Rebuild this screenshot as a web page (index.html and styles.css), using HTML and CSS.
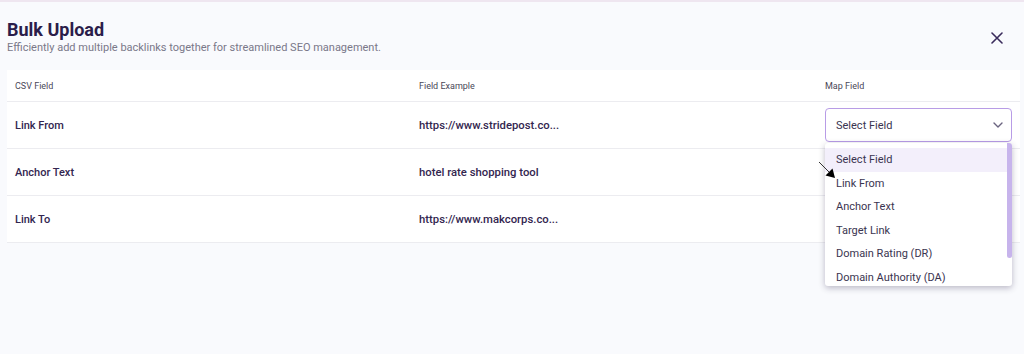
FILE: index.html
```html
<!DOCTYPE html>
<html lang="en">
<head>
<meta charset="utf-8">
<title>Bulk Upload</title>
<link rel="stylesheet" href="styles.css">
</head>
<body>
<div class="modal">
  <div class="modal-head">
    <div class="titles">
      <h1 class="title">Bulk Upload</h1>
      <p class="subtitle">Efficiently add multiple backlinks together for streamlined SEO management.</p>
    </div>
    <button class="close" aria-label="Close">
      <svg width="12" height="12" viewBox="0 0 12 12"><path d="M1 1L11 11M11 1L1 11" stroke="#3a2b5c" stroke-width="1.6" stroke-linecap="round"/></svg>
    </button>
  </div>
  <div class="table">
    <div class="row head">
      <div class="cell c1">CSV Field</div>
      <div class="cell c2">Field Example</div>
      <div class="cell c3">Map Field</div>
    </div>
    <div class="row">
      <div class="cell c1">Link From</div>
      <div class="cell c2 strong">https://www.stridepost.co...</div>
      <div class="cell c3">
        <div class="select-wrap">
          <div class="select">
            <span>Select Field</span>
            <svg width="10" height="6" viewBox="0 0 10 6"><path d="M1 1L5 5L9 1" fill="none" stroke="#6b6480" stroke-width="1.4" stroke-linecap="round" stroke-linejoin="round"/></svg>
          </div>
          <div class="menu">
            <div class="options">
              <div class="opt active">Select Field</div>
              <div class="opt">Link From</div>
              <div class="opt">Anchor Text</div>
              <div class="opt">Target Link</div>
              <div class="opt">Domain Rating (DR)</div>
              <div class="opt">Domain Authority (DA)</div>
            </div>
            <div class="scrollbar"><div class="thumb"></div></div>
          </div>
          <svg class="cursor" width="20" height="20" viewBox="0 0 20 20"><path d="M1 1L11 11" stroke="#333" stroke-width="1"/><path d="M17 17L7.5 14.5L14.5 7.5Z" fill="#000"/></svg>
        </div>
      </div>
    </div>
    <div class="row">
      <div class="cell c1">Anchor Text</div>
      <div class="cell c2 strong">hotel rate shopping tool</div>
      <div class="cell c3"></div>
    </div>
    <div class="row">
      <div class="cell c1">Link To</div>
      <div class="cell c2 strong">https://www.makcorps.co...</div>
      <div class="cell c3"></div>
    </div>
  </div>
</div>
</body>
</html>
```
FILE: styles.css
```css
* { box-sizing: border-box; }
html, body { margin: 0; padding: 0; }
body {
  width: 1024px;
  height: 354px;
  background: #f9fafd;
  font-family: Roboto, Inter, sans-serif;
  color: #33264f;
  border-top: 2px solid #efe6f0;
  overflow: hidden;
}
.modal { padding: 17px 4px 0 7px; }
.modal-head {
  display: flex;
  justify-content: space-between;
  align-items: flex-start;
  height: 51px;
}
.title {
  margin: 0;
  font-size: 18px;
  line-height: 22px;
  font-weight: 700;
  color: #2b1d4a;
}
.subtitle {
  margin: 0;
  font-size: 11px;
  line-height: 14px;
  color: #7a7889;
}
.close {
  border: 0;
  background: none;
  padding: 0;
  margin: 13px 17px 0 0;
  width: 12px;
  height: 12px;
  display: flex;
}
.table {
  background: #fff;
  width: 1013px;
}
.row {
  display: grid;
  grid-template-columns: 405px 405px 203px;
  height: 47px;
  align-items: center;
  border-bottom: 1px solid #ececf0;
  font-size: 11px;
  color: #33264f;
  font-weight: 500;
}
.row.head {
  height: 32px;
  font-size: 9px;
  color: #4a4858;
  font-weight: 400;
}
.cell { padding-left: 8px; position: relative; }
.cell.c2 { padding-left: 7px; }
.strong { font-weight: 500; font-size: 11.3px; }
.select-wrap { position: relative; width: 187px; }
.select {
  height: 34px;
  border: 1px solid #b89ce6;
  border-radius: 4px;
  display: flex;
  align-items: center;
  justify-content: space-between;
  padding: 0 8px 0 10px;
  font-size: 11px;
  color: #3a3450;
  font-weight: 400;
}
.menu {
  position: absolute;
  top: 35px;
  left: 0;
  width: 187px;
  height: 143px;
  background: #fff;
  border-radius: 3px;
  box-shadow: 0 2px 6px rgba(40, 30, 70, 0.3);
  display: flex;
  overflow: hidden;
  z-index: 5;
}
.options { flex: 1; padding-top: 5px; }
.opt {
  height: 23.5px;
  line-height: 23.5px;
  padding-left: 11px;
  font-size: 11px;
  color: #3a3450;
  font-weight: 400;
}
.opt.active { background: #f3effb; }
.scrollbar { width: 5px; }
.thumb {
  height: 115px;
  background: #c7b4ec;
  border-radius: 0 0 3px 3px;
}
.cursor {
  position: absolute;
  left: -7px;
  top: 53px;
  z-index: 6;
}
```
